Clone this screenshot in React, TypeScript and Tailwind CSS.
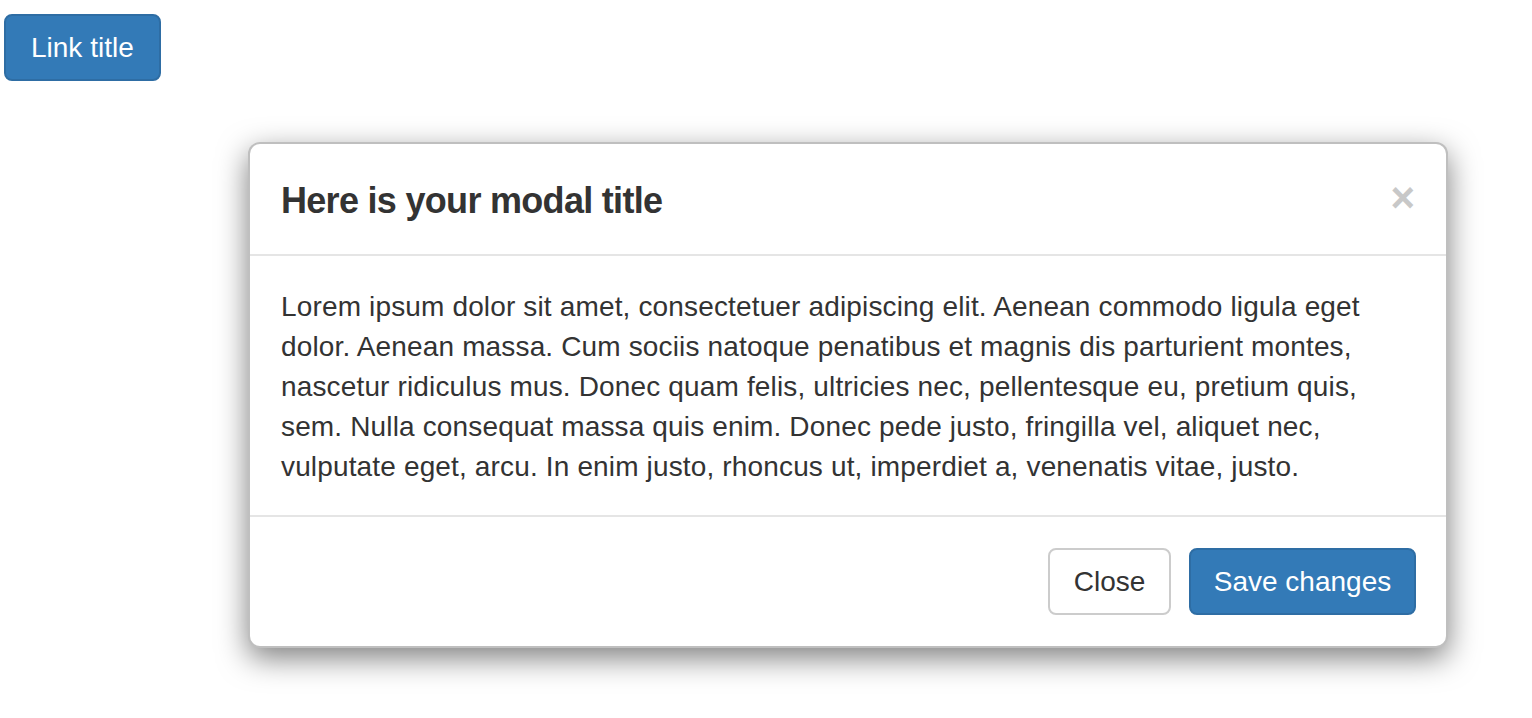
import React from "react";

export default function App() {
  const font = { fontFamily: '"Liberation Sans", Arial, Helvetica, sans-serif' };
  return (
    <div className="min-h-[718px] w-[1532px] bg-white text-[#333]" style={font}>
      <div className="pt-[14px] pl-[4px]">
        <button className="h-[67px] rounded-[8px] border-2 border-[#2e6da4] bg-[#337ab7] px-[25px] text-[28px] leading-[40px] text-white">
          Link title
        </button>
      </div>
      <div className="ml-[248px] mt-[61px] w-[1200px] rounded-[12px] border-2 border-[rgba(0,0,0,0.25)] bg-white shadow-[0_10px_30px_rgba(0,0,0,0.5)]">
        <div className="flex items-center justify-between border-b-2 border-[#e5e5e5] px-[31px] pt-[31px] pb-[28px]">
          <h4 className="text-[36px] font-bold leading-[51px] tracking-[-0.7px]">Here is your modal title</h4>
          <span className="-mt-[6px] text-[42px] font-bold leading-none text-[#c8c8c8]">×</span>
        </div>
        <div className="px-[31px] pt-[31px] pb-[28px] text-[28px] leading-[40px] tracking-[0.15px]">
          Lorem ipsum dolor sit amet, consectetuer adipiscing elit. Aenean commodo ligula eget
          <br />
          dolor. Aenean massa. Cum sociis natoque penatibus et magnis dis parturient montes,
          <br />
          nascetur ridiculus mus. Donec quam felis, ultricies nec, pellentesque eu, pretium quis,
          <br />
          sem. Nulla consequat massa quis enim. Donec pede justo, fringilla vel, aliquet nec,
          <br />
          vulputate eget, arcu. In enim justo, rhoncus ut, imperdiet a, venenatis vitae, justo.
        </div>
        <div className="flex justify-end gap-[18px] border-t-2 border-[#e5e5e5] px-[30px] pt-[31px] pb-[31px]">
          <button className="h-[67px] w-[123px] rounded-[8px] border-2 border-[#ccc] bg-white text-[28px] leading-[40px] text-[#333]">
            Close
          </button>
          <button className="h-[67px] w-[227px] rounded-[8px] border-2 border-[#2e6da4] bg-[#337ab7] text-[28px] leading-[40px] text-white">
            Save changes
          </button>
        </div>
      </div>
    </div>
  );
}
